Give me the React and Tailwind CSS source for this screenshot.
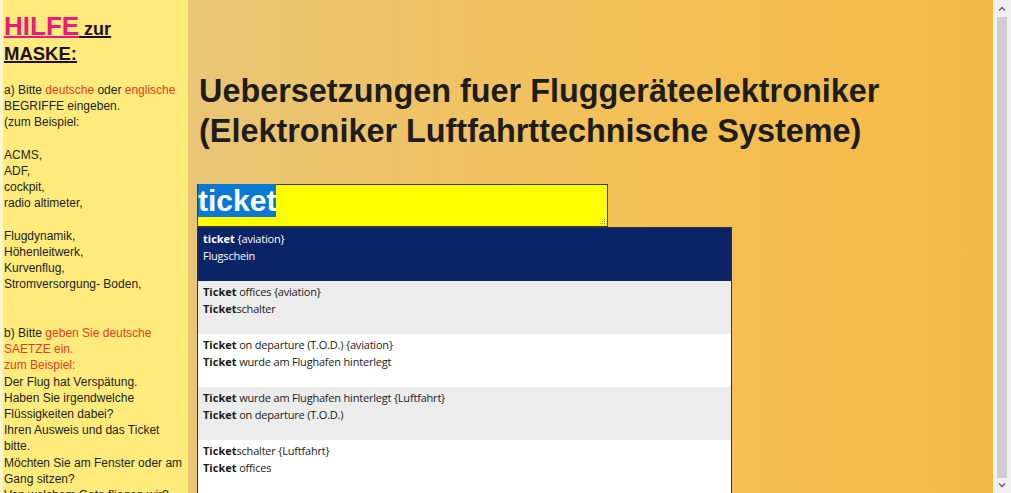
import React from "react";

/* Hilfe-Spalte links, Suche mit Vorschlagsliste rechts */

const RED = "text-[#e63c1c]";

const SUGGESTIONS = [
    { a: [["ticket", true], [" {aviation}", false]], b: [["Flugschein", false]] },
    { a: [["Ticket", true], [" offices {aviation}", false]], b: [["Ticket", true], ["schalter", false]] },
    { a: [["Ticket", true], [" on departure (T.O.D.) {aviation}", false]], b: [["Ticket", true], [" wurde am Flughafen hinterlegt", false]] },
    { a: [["Ticket", true], [" wurde am Flughafen hinterlegt {Luftfahrt}", false]], b: [["Ticket", true], [" on departure (T.O.D.)", false]] },
    { a: [["Ticket", true], ["schalter {Luftfahrt}", false]], b: [["Ticket", true], [" offices", false]] },
];

function Parts({ parts }) {
    return (
        <div>
            {parts.map(([t, bold], i) => (
                <span key={i} className={bold ? "font-bold" : "tracking-[-0.2px]"}>{t}</span>
            ))}
        </div>
    );
}

function Sidebar() {
    return (
        <div className="w-[188px] shrink-0 h-full bg-[#feeb7b] border-l-[3px] border-[#fff6c8] pl-[1px] pt-[14px] font-['Liberation_Sans',Arial,sans-serif] text-[#1e1e1e]">
            <div className="font-bold leading-[24px]">
                <span className="text-[26px] text-[#ec1a7d] underline decoration-[1.5px]">HILFE</span>
                <span className="text-[18px] text-[#22102a] underline decoration-[1.5px]"> zur</span>
                <br />
                <span className="text-[18.5px] text-[#22102a] underline decoration-[1.5px]">MASKE:</span>
            </div>
            <div className="mt-[15px] text-[12px] leading-[16.2px]">
                <div>
                    a) Bitte <span className={RED}>deutsche</span> oder <span className={RED}>englische</span>
                </div>
                <div>BEGRIFFE eingeben.</div>
                <div>(zum Beispiel:</div>
                <div>&nbsp;</div>
                <div>ACMS,</div>
                <div>ADF,</div>
                <div>cockpit,</div>
                <div>radio altimeter,</div>
                <div>&nbsp;</div>
                <div>Flugdynamik,</div>
                <div>Höhenleitwerk,</div>
                <div>Kurvenflug,</div>
                <div>Stromversorgung- Boden,</div>
                <div>&nbsp;</div>
                <div>&nbsp;</div>
                <div>
                    b) Bitte <span className={RED}>geben Sie deutsche</span>
                </div>
                <div className={RED}>SAETZE ein.</div>
                <div className={RED}>zum Beispiel:</div>
                <div>Der Flug hat Verspätung.</div>
                <div>Haben Sie irgendwelche</div>
                <div>Flüssigkeiten dabei?</div>
                <div>Ihren Ausweis und das Ticket</div>
                <div>bitte.</div>
                <div>Möchten Sie am Fenster oder am</div>
                <div>Gang sitzen?</div>
                <div>Von welchem Gate fliegen wir?</div>
            </div>
        </div>
    );
}

function Scrollbar() {
    return (
        <div className="w-[18px] shrink-0 h-full bg-[#f0f0f0] flex flex-col items-center">
            <div className="h-[17px] flex items-center justify-center">
                <svg width="8" height="5" viewBox="0 0 8 5">
                    <path d="M1 4.5 L4 1.5 L7 4.5" fill="none" stroke="#606060" strokeWidth="1.3" />
                </svg>
            </div>
            <div className="flex-1 w-[10px] bg-[#cdcdcd]" />
            <div className="h-[15px] flex items-center justify-center">
                <svg width="8" height="5" viewBox="0 0 8 5">
                    <path d="M1 0.5 L4 3.5 L7 0.5" fill="none" stroke="#606060" strokeWidth="1.3" />
                </svg>
            </div>
        </div>
    );
}

export default function App() {
    return (
        <div className="flex w-full h-[493px] overflow-hidden">
            <Sidebar />
            <div className="flex-1 h-full bg-gradient-to-r from-[#e9c576] via-[#f3c159] to-[#f6b946] pl-[9px] pt-[71px]">
                <h1 className="pl-[2px] font-['Liberation_Sans',Arial,sans-serif] font-bold text-[32.4px] leading-[40px] text-[#1d1d1d]">
                    Uebersetzungen fuer Fluggeräteelektroniker
                    <br />
                    (Elektroniker Luftfahrttechnische Systeme)
                </h1>

                {/* Eingabefeld */}
                <div className="mt-[33px] w-[411px] h-[43px] bg-[#ffff00] border border-[#3a3a3a] relative">
                    <div className="pt-[1px] font-['Liberation_Sans',Arial,sans-serif] font-bold text-[30px] leading-[30px]">
                        <span className="bg-[#0a78d4] text-white">ticket</span>
                    </div>
                    <svg className="absolute right-[1px] bottom-[1px]" width="7" height="7" viewBox="0 0 7 7">
                        <rect x="5" y="1" width="1" height="1" fill="#9a9a7a" />
                        <rect x="3" y="3" width="1" height="1" fill="#9a9a7a" />
                        <rect x="5" y="3" width="1" height="1" fill="#9a9a7a" />
                        <rect x="1" y="5" width="1" height="1" fill="#9a9a7a" />
                        <rect x="3" y="5" width="1" height="1" fill="#9a9a7a" />
                        <rect x="5" y="5" width="1" height="1" fill="#9a9a7a" />
                    </svg>
                </div>

                {/* Vorschlagsliste */}
                <div className="w-[535px] border border-[#333] font-['Open_Sans',sans-serif] text-[11px] leading-[17px]">
                    {SUGGESTIONS.map((s, i) => (
                        <div
                            key={i}
                            className={`h-[53px] pl-[5px] pt-[2px] ${
                                i === 0 ? "bg-[#0b2467] text-white" : i % 2 === 1 ? "bg-[#ececec] text-[#1a1a1a]" : "bg-white text-[#1a1a1a]"
                            }`}
                        >
                            <Parts parts={s.a} />
                            <Parts parts={s.b} />
                        </div>
                    ))}
                </div>
            </div>
            <Scrollbar />
        </div>
    );
}
